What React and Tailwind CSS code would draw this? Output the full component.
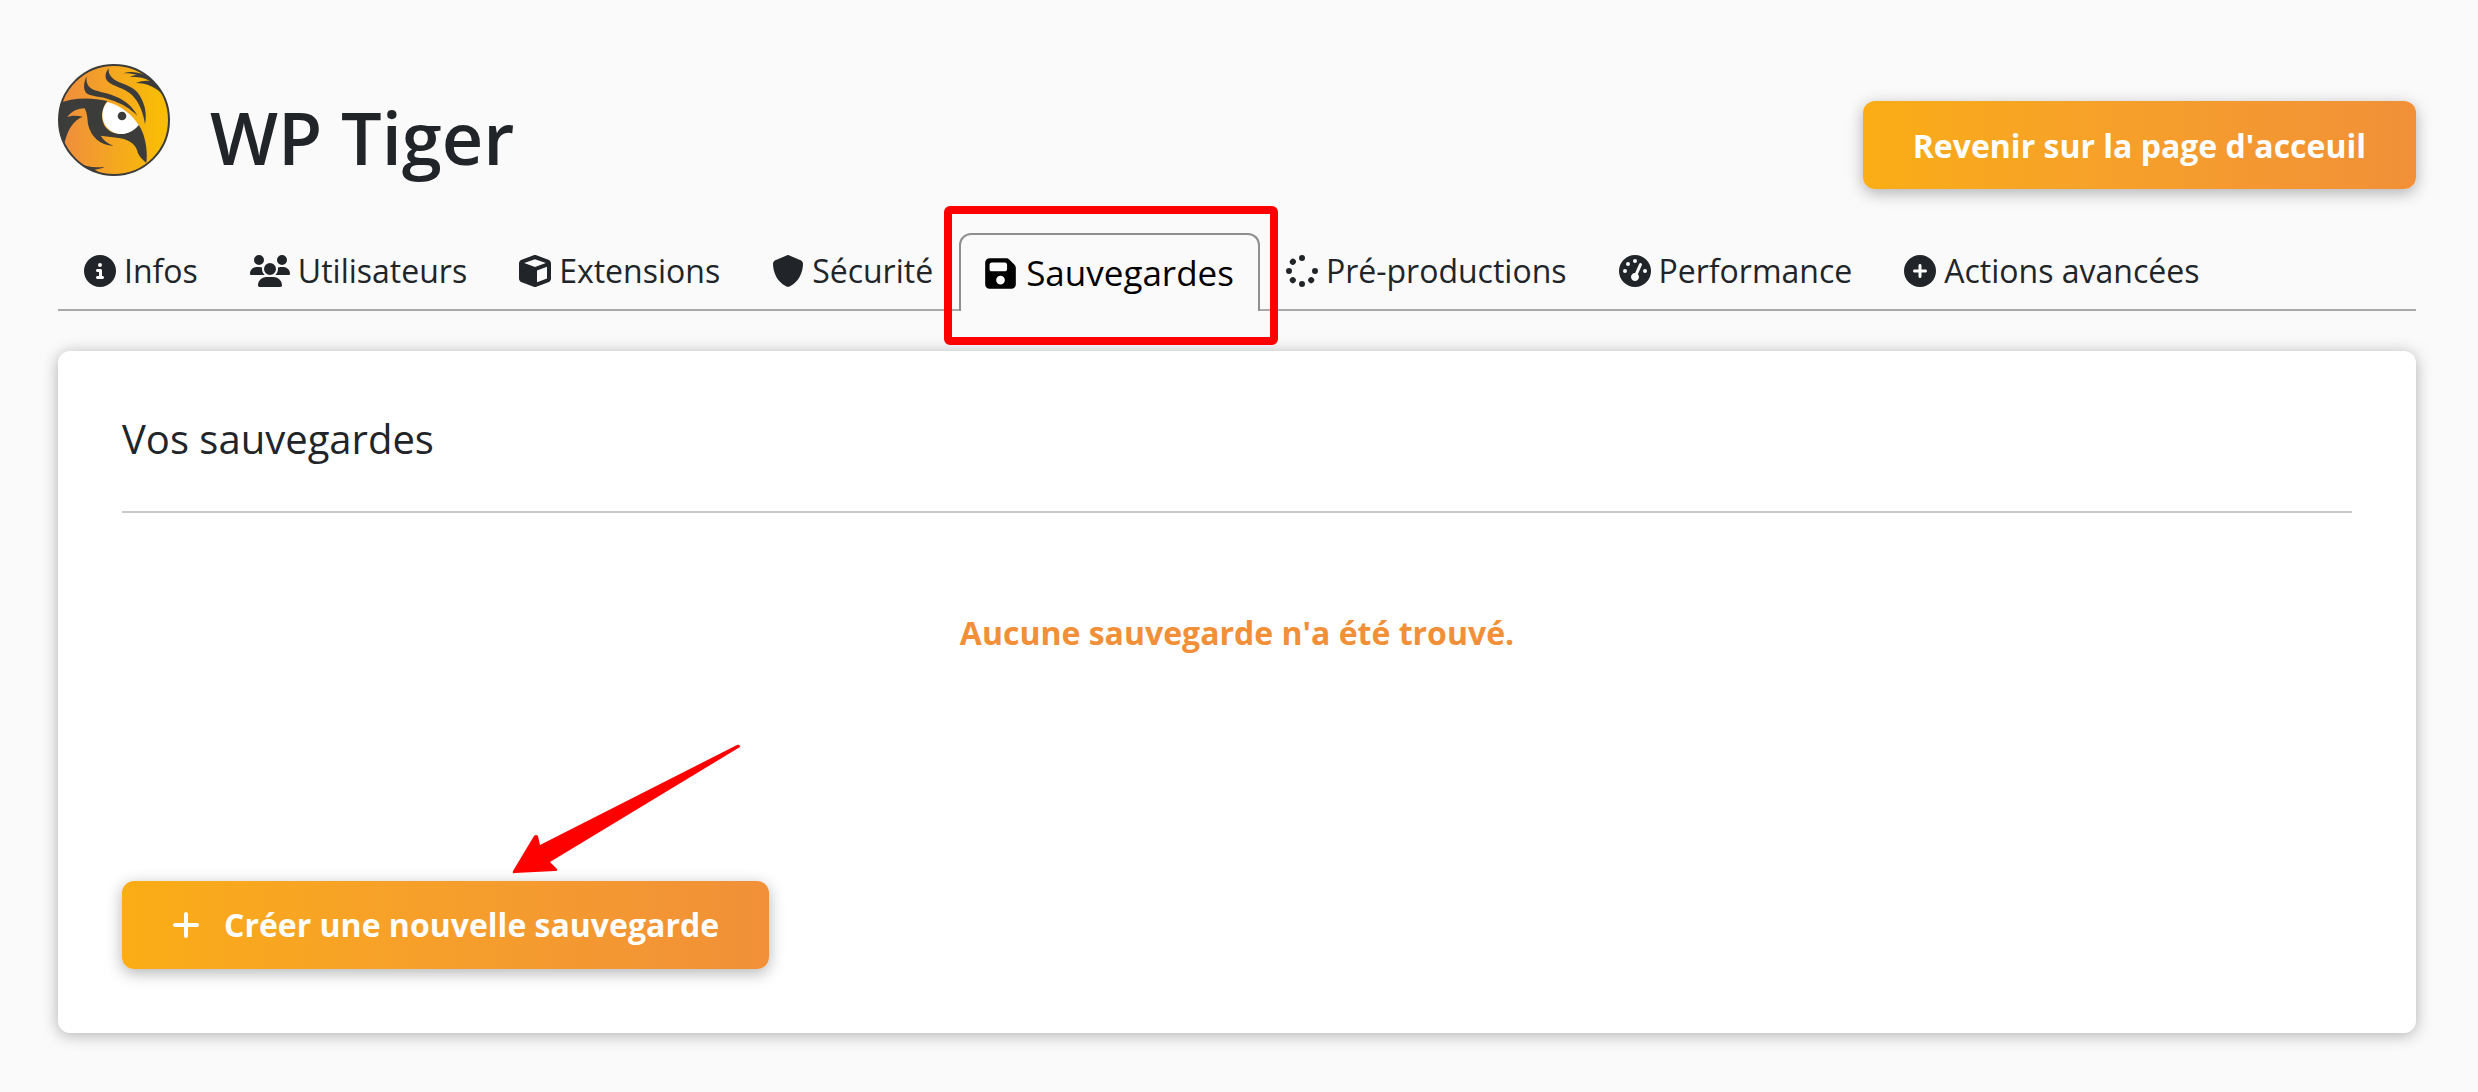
import {
  FaCircleInfo,
  FaUsers,
  FaCube,
  FaShield,
  FaFloppyDisk,
  FaSpinner,
  FaGaugeHigh,
  FaCirclePlus,
  FaPlus,
} from "react-icons/fa6";

const tabs = [
  { label: "Infos", icon: FaCircleInfo },
  { label: "Utilisateurs", icon: FaUsers, iconClass: "w-10" },
  { label: "Extensions", icon: FaCube },
  { label: "Sécurité", icon: FaShield },
  { label: "Sauvegardes", icon: FaFloppyDisk, iconClass: "w-[31px]", active: true },
  { label: "Pré-productions", icon: FaSpinner },
  { label: "Performance", icon: FaGaugeHigh },
  { label: "Actions avancées", icon: FaCirclePlus },
];

function TigerLogo() {
  return (
    <svg viewBox="24 27 336 336" className="size-28 shrink-0" aria-hidden="true">
      <defs>
        <linearGradient id="fur" x1="0" x2="1" y1="0" y2="0">
          <stop offset="0.1" stopColor="#f0913a" />
          <stop offset="0.9" stopColor="#f8bc06" />
        </linearGradient>
        <clipPath id="disc">
          <circle cx="192" cy="195" r="166" />
        </clipPath>
      </defs>
      <circle cx="192" cy="195" r="165" fill="url(#fur)" />
      <g clipPath="url(#disc)" fill="#3c3c3a">
        <path d="M110 64C100 84 100 104 108 113C122 126 152 122 180 134C214 144 240 160 262 182C250 158 228 138 200 126C176 114 146 112 126 102C112 94 108 82 110 64Z" />
        <path d="M176 40C164 56 164 70 174 80C190 94 222 98 246 120C268 142 280 174 285 208C292 176 284 140 262 112C244 92 220 88 200 78C182 68 174 56 176 40Z" />
        <path d="M220 55C244 46 276 52 300 68C320 80 334 98 340 120C320 98 290 84 258 84C272 78 288 76 300 78C280 66 262 66 240 66C248 62 256 60 262 60C248 56 234 54 220 55Z" />
        <path d="M20 148C60 128 120 126 172 138C154 160 150 196 168 218C190 244 230 242 266 210C284 236 294 280 289 324C276 312 266 304 262 288C256 264 230 250 200 248C184 246 168 244 152 242C160 256 174 266 190 272C150 272 122 244 114 208C112 190 112 174 104 160C84 160 66 168 52 186C68 180 84 182 98 185C72 196 54 220 44 262L20 230Z" />
        <path d="M80 322C108 336 134 340 164 335C154 341 142 342 134 344C142 348 148 352 156 362L110 352Z" />
      </g>
      <path d="M172 141C154 160 151 194 170 217C194 246 240 244 266 210C246 180 212 150 172 141Z" fill="#fff" />
      <circle cx="216" cy="183" r="13" fill="#3c3c3a" />
      <circle cx="192" cy="195" r="165" fill="none" stroke="#3c3c3a" strokeWidth="6" />
    </svg>
  );
}

function Tab({ label, icon: Icon, iconClass, active }) {
  if (active) {
    return (
      <li className="relative -mb-[2px]">
        <a
          href="#"
          aria-current="page"
          className="flex h-[78px] items-center gap-2.5 rounded-t-xl border-2 border-b-0 border-[#8f8f8f] bg-[#fafafa] px-6 text-[35px] text-black"
        >
          <Icon className={iconClass} />
          {label}
        </a>
        <div className="pointer-events-none absolute -top-[27px] -right-[18px] -bottom-[34px] -left-[15px] rounded-md border-8 border-[#ff0000]" />
      </li>
    );
  }
  return (
    <li>
      <a href="#" className="flex h-[76px] items-center gap-2 px-[26px] text-[32px] text-[#212529]">
        <Icon className={iconClass} />
        {label}
      </a>
    </li>
  );
}

export default function App() {
  return (
    <div className="min-h-screen bg-[#fafafa] pt-16 pr-[62px] pb-[58px] pl-[58px] font-['Open_Sans',sans-serif] text-[#212529]">
      <header className="flex items-start justify-between">
        <div className="flex items-start gap-10">
          <TigerLogo />
          <h1 className="mt-6 text-[72px] leading-[98px] font-semibold">WP Tiger</h1>
        </div>
        <button
          type="button"
          className="mt-[37px] h-22 rounded-xl bg-linear-to-r from-[#faad14] to-[#f19038] px-[50px] pt-0.5 text-[32px] font-bold text-white shadow-[0_4px_16px_rgba(0,0,0,0.3)]"
        >
          Revenir sur la page d'acceuil
        </button>
      </header>

      <nav className="mt-11">
        <ul className="flex items-end border-b-2 border-[#a9a9a9]">
          {tabs.map((tab) => (
            <Tab key={tab.label} {...tab} />
          ))}
        </ul>
      </nav>

      <main className="mt-10 rounded-xl bg-white p-16 shadow-[0_2px_16px_rgba(0,0,0,0.3)]">
        <h2 className="border-b-2 border-[#c8c8c8] pb-12 text-[40px] leading-[48px]">Vos sauvegardes</h2>
        <p className="mt-24 text-center text-[32px] leading-[48px] font-bold text-[#f19038]">
          Aucune sauvegarde n'a été trouvé.
        </p>
        <div className="relative mt-[224px] w-fit">
          <button
            type="button"
            className="flex h-22 items-center gap-6 rounded-xl bg-linear-to-r from-[#faad14] to-[#f19038] px-[50px] text-[32px] font-bold text-white shadow-[0_4px_16px_rgba(0,0,0,0.3)]"
          >
            <FaPlus className="w-7" />
            Créer une nouvelle sauvegarde
          </button>
          <svg viewBox="0 0 228 130" className="pointer-events-none absolute -top-[137px] left-[390px] w-[228px]" aria-hidden="true">
            <path
              d="M1 127L22 92Q24 90 26 92L28 101L225 1Q228 0 228 3L38 118L45 125Q46 127 43 127L3 129Q0 130 1 127Z"
              fill="#ff0000"
            />
          </svg>
        </div>
      </main>
    </div>
  );
}
